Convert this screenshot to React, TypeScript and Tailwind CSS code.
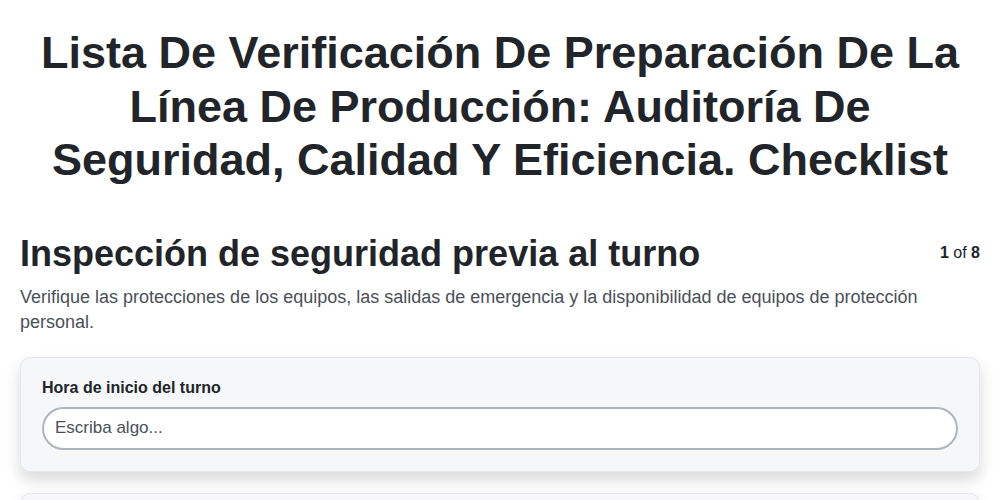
import React from "react";

export default function App() {
  return (
    <div
      className="min-h-[500px] bg-white px-5 text-[#212529]"
      style={{ fontFamily: '"Liberation Sans", Arial, sans-serif' }}
    >
      <h1 className="mx-auto max-w-[950px] pt-[26px] text-center text-[45px] font-bold leading-[53.5px] text-[#212529]">
        Lista De Verificación De Preparación De La Línea De Producción: Auditoría De Seguridad, Calidad Y Eficiencia. Checklist
      </h1>
      <div className="mt-[45px] flex items-start justify-between">
        <h2 className="text-[36px] font-bold leading-[43px] text-[#212529]">
          Inspección de seguridad previa al turno
        </h2>
        <div className="mt-[9px] text-[16px] leading-[24px] text-[#212529]">
          <span className="font-bold">1</span> of <span className="font-bold">8</span>
        </div>
      </div>
      <p className="mt-[10px] text-[18px] leading-[25px] text-[#495057]">
        Verifique las protecciones de los equipos, las salidas de emergencia y la disponibilidad de equipos de protección personal.
      </p>
      <div className="mt-[22px] flex flex-col gap-[21px]">
        <div className="rounded-[10px] border border-[#e5e7eb] bg-[#f6f7f9] px-[21px] pb-[21px] pt-[18px] shadow-[0_8px_16px_rgba(0,0,0,0.15)]">
          <label className="block text-[16px] font-bold leading-[24px] text-[#212529]">
            Hora de inicio del turno
          </label>
          <input
            className="mt-[7px] block h-[43px] w-full rounded-full border-2 border-[#adb5bd] bg-white px-[11px] text-[17px] text-[#212529] outline-none placeholder:text-[#495057]"
            placeholder="Escriba algo..."
          />
        </div>
        <div className="h-[100px] rounded-[10px] border border-[#e5e7eb] bg-[#f6f7f9] shadow-[0_8px_16px_rgba(0,0,0,0.15)]" />
      </div>
    </div>
  );
}
